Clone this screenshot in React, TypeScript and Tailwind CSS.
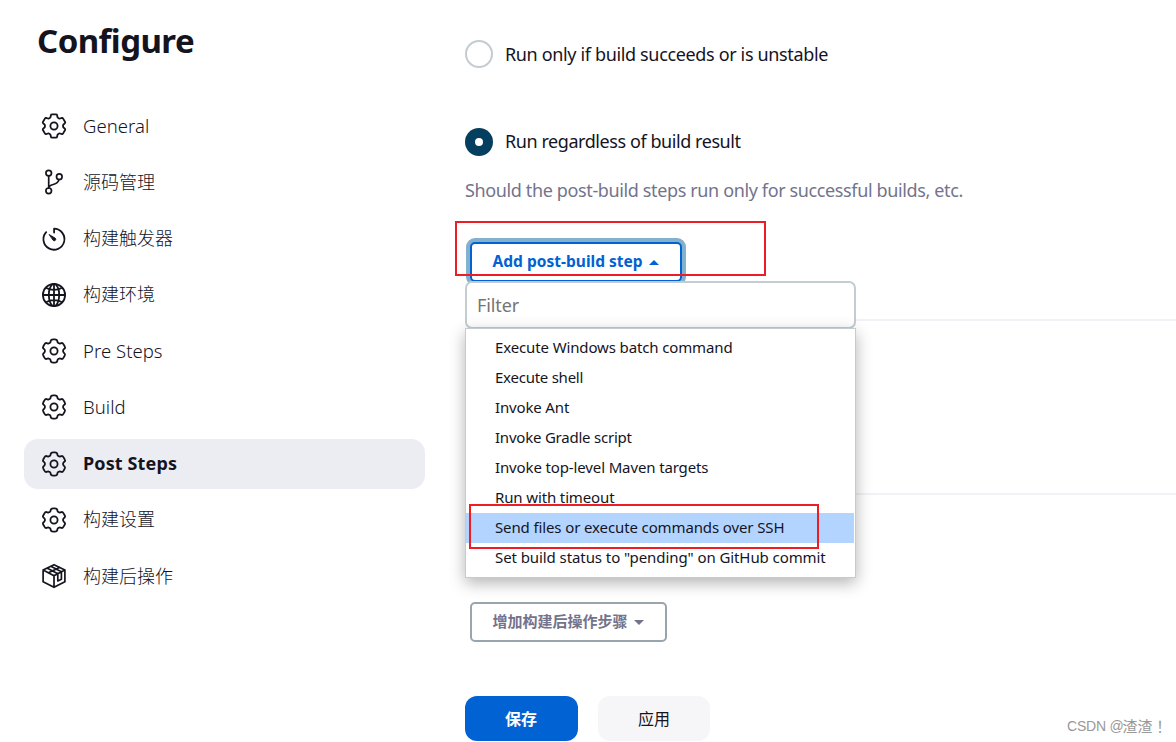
import type { ReactNode } from "react";

const iconClass = "size-[26px] shrink-0";

// Outline of a six-toothed gear centred on (13, 13); `round` is the share of each edge given to its corners.
function gearPath(round: number) {
  const tooth = [[-3.6, -8.4], [-2.9, -11.6], [2.9, -11.6], [3.6, -8.4]];
  const pts: number[][] = [];
  for (let k = 0; k < 6; k++) {
    const a = (k * Math.PI) / 3;
    for (const [x, y] of tooth) {
      pts.push([13 + x * Math.cos(a) - y * Math.sin(a), 13 + x * Math.sin(a) + y * Math.cos(a)]);
    }
  }
  const n = pts.length;
  const toward = (p: number[], q: number[]) => `${(p[0] + (q[0] - p[0]) * round).toFixed(2)} ${(p[1] + (q[1] - p[1]) * round).toFixed(2)}`;
  return (
    pts
      .map((p, i) => `${i ? "L" : "M"}${toward(p, pts[(i + n - 1) % n])}Q${p[0].toFixed(2)} ${p[1].toFixed(2)} ${toward(p, pts[(i + 1) % n])}`)
      .join("") + "Z"
  );
}

function GearIcon({ round = 0.34 }: { round?: number }) {
  return (
    <svg viewBox="0 0 26 26" className={iconClass} fill="none" stroke="currentColor" strokeWidth="1.8" strokeLinejoin="round">
      <path d={gearPath(round)} />
      <circle cx="13" cy="13" r="3.6" />
    </svg>
  );
}

function BranchIcon() {
  return (
    <svg viewBox="0 0 26 26" className={iconClass} fill="none" stroke="currentColor" strokeWidth="1.7" strokeLinecap="round">
      <circle cx="7.7" cy="4.1" r="2.8" />
      <circle cx="7.7" cy="21.800" r="2.8" />
      <circle cx="18.3" cy="7.7" r="2.8" />
      <path d="M7.700 6.900v12M18 10.500c-.4 3.100-3 4.200-5.800 5-2.800.8-4.500 1.500-4.500 3.500" />
    </svg>
  );
}

function TimerIcon() {
  return (
    <svg viewBox="0 0 26 26" className={iconClass} fill="none" stroke="currentColor" strokeWidth="1.8" strokeLinecap="round" strokeLinejoin="round">
      <path d="M13.100 6.600V2.700a10.500 10.500 0 1 1-7.900 3.400" />
      <path d="M8.400 8.700 14.400 12.300a1.500 1.500 0 0 1-2 2.200z" fill="currentColor" strokeWidth="0.9" />
    </svg>
  );
}

function GlobeIcon() {
  return (
    <svg viewBox="0 0 26 26" className={iconClass} fill="none" stroke="currentColor" strokeWidth="1.8">
      <circle cx="13" cy="13" r="11.1" />
      <ellipse cx="13" cy="13" rx="5.2" ry="11.1" />
      <path d="M13 1.900v22.200M1.900 13h22.200M5 5.700c4.500 3 11.500 3 16 0M5 20.300c4.500-3 11.500-3 16 0" />
    </svg>
  );
}

function PackageIcon() {
  return (
    <svg viewBox="0 0 26 26" className={iconClass} fill="none" stroke="currentColor" strokeWidth="1.7" strokeLinecap="round" strokeLinejoin="round">
      <path d="M13 1.700 23.900 7v11.700L13 24.300 2.100 18.700V7zM2.100 7 13 12.700 23.900 7M13 12.700v11.600M6 5.100l10.800 5.600M9.800 3.300l10.600 5.500M7.500 9.800 18.500 4.400M16.800 10.700v7.300l3.600-1.800V8.800" />
    </svg>
  );
}

type Item = { label: string; icon: ReactNode; active?: boolean };
const items: Item[] = [
  { label: "General", icon: <GearIcon round={0.18} /> },
  { label: "源码管理", icon: <BranchIcon /> },
  { label: "构建触发器", icon: <TimerIcon /> },
  { label: "构建环境", icon: <GlobeIcon /> },
  { label: "Pre Steps", icon: <GearIcon /> },
  { label: "Build", icon: <GearIcon /> },
  { label: "Post Steps", icon: <GearIcon />, active: true },
  { label: "构建设置", icon: <GearIcon /> },
  { label: "构建后操作", icon: <PackageIcon /> },
];

const steps = [
  { label: "Execute Windows batch command", track: "tracking-[-0.13px]" },
  { label: "Execute shell", track: "tracking-[-0.25px]" },
  { label: "Invoke Ant", track: "tracking-[-0.15px]" },
  { label: "Invoke Gradle script", track: "tracking-[-0.22px]" },
  { label: "Invoke top-level Maven targets", track: "tracking-[-0.13px]" },
  { label: "Run with timeout", track: "tracking-[-0.13px]" },
  { label: "Send files or execute commands over SSH", track: "tracking-[-0.12px]", active: true },
  { label: 'Set build status to "pending" on GitHub commit', track: "tracking-[-0.08px]" },
];

export default function App() {
  return (
    <div className="relative flex h-[742px] w-[1176px] overflow-hidden bg-white font-['Noto_Sans','Noto_Sans_CJK_SC',sans-serif] text-[#14141f]">
      <aside className="w-[425px] shrink-0 pl-6">
        <h1 className="mt-[17px] pl-[13px] text-[33px] leading-[48px] font-bold tracking-[-0.55px]">Configure</h1>
        <nav className="mt-[36px] flex flex-col gap-[6.25px]">
          {items.map((it) => (
            <a key={it.label} className={`flex h-[50px] items-center gap-4 rounded-[14px] pl-[17px] text-[18px] ${it.active ? "bg-[#ecedf3] font-bold" : "font-light"}`}>
              {it.icon}
              <span className={it.active ? "tracking-[0.12px]" : /^[A-Z]/.test(it.label) ? "text-[18.5px] tracking-[0.04px]" : ""}>{it.label}</span>
            </a>
          ))}
        </nav>
      </aside>

      <main className="flex w-[751px] flex-col pl-10">
        <label className="mt-[40px] flex h-7 items-center gap-3 text-[18px]">
          <span className="size-7 rounded-full border-[2.5px] border-[#c3ccd1]" />
          <span className="tracking-[-0.35px]">Run only if build succeeds or is unstable</span>
        </label>
        <label className="mt-[60px] flex h-7 items-center gap-3 text-[18px]">
          <span className="grid size-7 place-items-center rounded-full bg-[#053f60]">
            <span className="size-2 rounded-full bg-white" />
          </span>
          <span className="pb-[2px] tracking-[-0.43px]">Run regardless of build result</span>
        </label>
        <p className="mt-[20px] text-[18px] leading-7 tracking-[-0.37px] text-[#73738c]">Should the post-build steps run only for successful builds, etc.</p>

        <div className="relative mt-[38px] ml-[5px] h-10 w-[212px]">
          <button className="flex h-10 w-[212px] items-center rounded-[5px] border-2 border-[#0062d3] bg-white pl-[20.5px] text-[15.5px] font-bold text-[#0062d3] shadow-[0_0_0_4px_#83b0cc]">
            <span className="tracking-[0.02px]">Add post-build step</span>
            <svg viewBox="0 0 10 5" className="ml-[6px] h-[5px] w-[10px]"><path d="M0 5 5 0l5 5z" fill="currentColor" /></svg>
          </button>
          <div className="absolute top-[39px] left-[-5px] z-10 w-[391px]">
            <div className="h-12 rounded-[7px] border-2 border-[#c3ccd1] bg-white pl-[10px] text-[18px] leading-[45px] tracking-[-0.1px] text-[#757575]">Filter</div>
            <ul className="-mt-px h-[250px] border border-[#c3ccd1] bg-white pt-1 shadow-[0_5px_15px_rgba(0,0,0,0.3)]">
              {steps.map((s) => (
                <li key={s.label} className={`mr-px h-[30px] pl-[29px] text-[15px] leading-[28px] whitespace-nowrap ${s.active ? "bg-[#b3d4ff]" : ""}`}>
                  <span className={s.track}>{s.label}</span>
                </li>
              ))}
            </ul>
          </div>
        </div>
        <hr className="mt-[37px] border-t-2 border-[#f1f1f6]" />
        <hr className="mt-[172px] border-t-2 border-[#f1f1f6]" />
        <button className="mt-[107px] ml-[5px] flex h-10 w-[197px] items-center rounded-[5px] border-2 border-[#98a5ad] pl-[20.5px] text-[15px] font-bold text-[#73738c]">
          <span className="pb-[2px]">增加构建后操作步骤</span>
          <svg viewBox="0 0 10 5" className="ml-[6.5px] h-[5px] w-[10px]"><path d="M0 0h10L5 5z" fill="currentColor" /></svg>
        </button>
        <div className="mt-[54px] flex gap-5 text-[16px]">
          <button className="h-[45px] w-[113px] rounded-xl bg-[#0062d3] pr-px font-bold text-white">保存</button>
          <button className="h-[45px] w-[112px] rounded-xl bg-[#f6f6f9]">应用</button>
        </div>
      </main>

      <div className="absolute top-[221px] left-[455px] z-20 h-[55px] w-[311px] border-2 border-[#ee1c24]" />
      <div className="absolute top-[504px] left-[469px] z-20 h-[45px] w-[350px] border-2 border-[#ee1c24]" />
      <div className="absolute top-[715px] left-[1067px] flex items-center font-['Liberation_Sans',sans-serif] text-[14px] leading-[22px] whitespace-nowrap text-[#999]">
        <span className="tracking-[-0.2px]">CSDN @</span>
        <span className="-ml-px font-['Noto_Sans_CJK_TC',sans-serif] text-[15px]">渣渣！</span>
      </div>
    </div>
  );
}
